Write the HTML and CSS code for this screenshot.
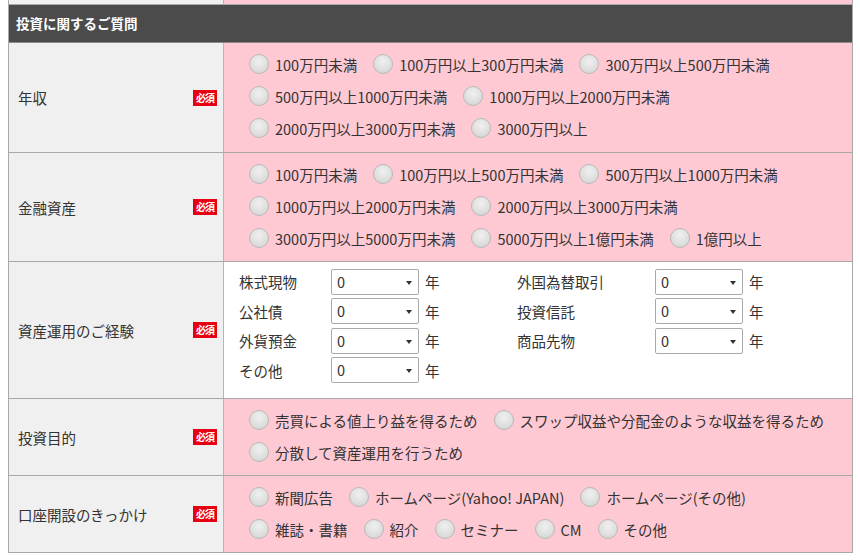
FILE: index.html
```html
<!DOCTYPE html>
<html lang="ja">
<head>
    <meta charset="UTF-8">
    <title>投資に関するご質問</title>
    <link rel="stylesheet" href="styles.css">
</head>
<body>
    <div id="form-table">
        <div class="row top-cut">
            <div class="label"></div>
            <div class="field pink"></div>
        </div>
        <div class="section-head">投資に関するご質問</div>

        <div class="row">
            <div class="label"><span>年収</span><span class="req">必須</span></div>
            <div class="field pink first">
                <label class="opt"><span class="radio"></span>100万円未満</label>
                <label class="opt"><span class="radio"></span>100万円以上300万円未満</label>
                <label class="opt"><span class="radio"></span>300万円以上500万円未満</label>
                <label class="opt"><span class="radio"></span>500万円以上1000万円未満</label>
                <label class="opt"><span class="radio"></span>1000万円以上2000万円未満</label>
                <label class="opt"><span class="radio"></span>2000万円以上3000万円未満</label>
                <label class="opt"><span class="radio"></span>3000万円以上</label>
            </div>
        </div>

        <div class="row">
            <div class="label"><span>金融資産</span><span class="req">必須</span></div>
            <div class="field pink">
                <label class="opt"><span class="radio"></span>100万円未満</label>
                <label class="opt"><span class="radio"></span>100万円以上500万円未満</label>
                <label class="opt"><span class="radio"></span>500万円以上1000万円未満</label>
                <label class="opt"><span class="radio"></span>1000万円以上2000万円未満</label>
                <label class="opt"><span class="radio"></span>2000万円以上3000万円未満</label>
                <label class="opt"><span class="radio"></span>3000万円以上5000万円未満</label>
                <label class="opt"><span class="radio"></span>5000万円以上1億円未満</label>
                <label class="opt"><span class="radio"></span>1億円以上</label>
            </div>
        </div>

        <div class="row">
            <div class="label"><span>資産運用のご経験</span><span class="req">必須</span></div>
            <div class="field exp">
                <span>株式現物</span><span class="sel">0</span><span>年</span>
                <span>外国為替取引</span><span class="sel">0</span><span>年</span>
                <span>公社債</span><span class="sel">0</span><span>年</span>
                <span>投資信託</span><span class="sel">0</span><span>年</span>
                <span>外貨預金</span><span class="sel">0</span><span>年</span>
                <span>商品先物</span><span class="sel">0</span><span>年</span>
                <span>その他</span><span class="sel">0</span><span>年</span>
            </div>
        </div>

        <div class="row">
            <div class="label"><span>投資目的</span><span class="req">必須</span></div>
            <div class="field pink">
                <label class="opt"><span class="radio"></span>売買による値上り益を得るため</label>
                <label class="opt"><span class="radio"></span>スワップ収益や分配金のような収益を得るため</label>
                <label class="opt"><span class="radio"></span>分散して資産運用を行うため</label>
            </div>
        </div>

        <div class="row">
            <div class="label"><span>口座開設のきっかけ</span><span class="req">必須</span></div>
            <div class="field pink">
                <label class="opt"><span class="radio"></span>新聞広告</label>
                <label class="opt"><span class="radio"></span>ホームページ(Yahoo! JAPAN)</label>
                <label class="opt"><span class="radio"></span>ホームページ(その他)</label>
                <label class="opt"><span class="radio"></span>雑誌・書籍</label>
                <label class="opt"><span class="radio"></span>紹介</label>
                <label class="opt"><span class="radio"></span>セミナー</label>
                <label class="opt"><span class="radio"></span>CM</label>
                <label class="opt"><span class="radio"></span>その他</label>
            </div>
        </div>
    </div>
</body>
</html>
```

FILE: styles.css
```css
body {
    margin: 0;
    background: #fff;
    font-family: "Noto Sans CJK JP", "Noto Sans", sans-serif;
    font-size: 14.5px;
    color: #333;
}
#form-table {
    margin: 0 7px 0 8px;
    border-left: 1px solid #a8a8a8;
    border-right: 1px solid #a8a8a8;
    border-bottom: 1px solid #a8a8a8;
}
.row {
    display: grid;
    grid-template-columns: 215px 1fr;
    border-bottom: 1px solid #a8a8a8;
}
.row:last-child {
    border-bottom: none;
}
.top-cut {
    height: 4px;
}
.top-cut .label,
.top-cut .field {
    padding: 0;
}
.label {
    background: #f0f0f0;
    border-right: 1px solid #b5b5b5;
    display: flex;
    align-items: center;
    justify-content: space-between;
    padding: 0 6px 0 9px;
}
.req {
    background: #e60012;
    color: #fff;
    font-size: 10px;
    font-weight: bold;
    line-height: 16px;
    padding: 0 3px;
    letter-spacing: -1px;
}
.section-head {
    background: #4b4b4b;
    color: #fff;
    font-weight: bold;
    font-size: 13.5px;
    height: 37px;
    line-height: 37px;
    padding-left: 7px;
    border-bottom: 1px solid #8a8a8a;
}
.field {
    padding: 5px 10px 7px 25px;
    display: flex;
    flex-wrap: wrap;
    align-content: flex-start;
}
.field.first {
    padding-bottom: 8px;
}
.pink {
    background: #ffc9d3;
}
.opt {
    display: flex;
    align-items: center;
    height: 32px;
    white-space: nowrap;
    margin-right: 16px;
}
.radio {
    width: 18px;
    height: 18px;
    border-radius: 50%;
    border: 1px solid #b8b8b8;
    background: radial-gradient(circle at 50% 35%, #f0f0f0 0%, #dedede 60%, #cfcfcf 100%);
    margin-right: 6px;
    flex-shrink: 0;
}
.exp {
    display: grid;
    grid-template-columns: 92px 94px 92px 138px 94px auto;
    grid-auto-rows: 29.5px;
    align-items: center;
    padding: 5px 10px 13px 15px;
    background: #fff;
}
.sel {
    width: 88px;
    height: 26px;
    box-sizing: border-box;
    border: 1px solid #a9a9a9;
    border-radius: 2px;
    padding-left: 5px;
    line-height: 24px;
    position: relative;
    background: #fff;
}
.sel::after {
    content: "";
    position: absolute;
    right: 6px;
    top: 11px;
    border-left: 3px solid transparent;
    border-right: 3px solid transparent;
    border-top: 4px solid #333;
}
```
